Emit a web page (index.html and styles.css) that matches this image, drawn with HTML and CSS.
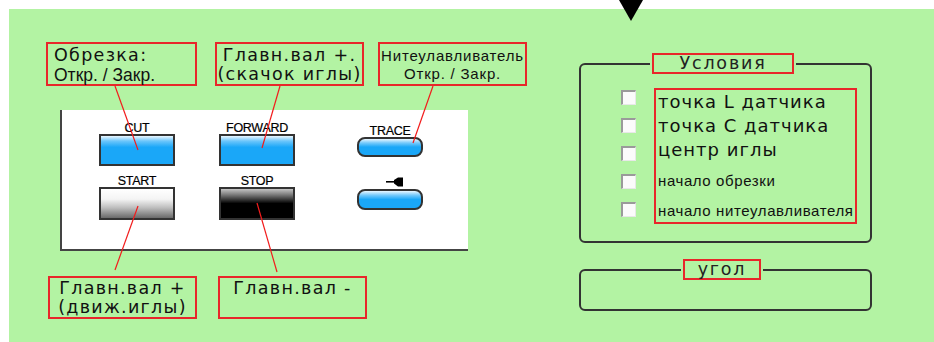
FILE: index.html
```html
<!DOCTYPE html>
<html lang="ru">
<head>
  <meta charset="UTF-8" />
  <title>Панель управления</title>
  <link rel="stylesheet" href="styles.css">
</head>
<body>
<div class="page">
  <div class="marker"></div>

  <div class="screen">
    <div class="left">
      <!-- notes above the panel -->
      <div class="notes notes-top">
        <div class="note note-cut">
          <p class="t-wide">Обрезка:</p>
          <p class="t-mid">Откр. / Закр.</p>
        </div>
        <div class="note note-fwd center">
          <p class="t-wide">Главн.вал +.</p>
          <p class="t-wide">(скачок иглы)</p>
        </div>
        <div class="note note-trace center">
          <p class="t-small">Нитеулавливатель</p>
          <p class="t-small">Откр. / Закр.</p>
        </div>
      </div>

      <div class="panel">
        <div class="ctl">
          <span class="lbl">CUT</span>
          <div class="btn blue"></div>
        </div>
        <div class="ctl">
          <span class="lbl">FORWARD</span>
          <div class="btn blue"></div>
        </div>
        <div class="ctl ctl-trace">
          <span class="lbl">TRACE</span>
          <div class="pill"></div>
        </div>
        <div class="ctl">
          <span class="lbl">START</span>
          <div class="btn white"></div>
        </div>
        <div class="ctl">
          <span class="lbl">STOP</span>
          <div class="btn black"></div>
        </div>
        <div class="ctl ctl-back">
          <svg class="ico" width="18" height="10" viewBox="0 0 18 10">
            <rect x="0" y="4" width="9" height="1.6" fill="#000"/>
            <polygon points="8,3 12,0.5 17,0.5 17,9.5 12,9.5 8,6.5" fill="#000"/>
          </svg>
          <div class="pill"></div>
        </div>
      </div>

      <!-- notes below the panel -->
      <div class="notes notes-bottom">
        <div class="note note-start center">
          <p class="t-wide">Главн.вал +</p>
          <p class="t-wide">(движ.иглы)</p>
        </div>
        <div class="note note-stop center">
          <p class="t-wide">Главн.вал -</p>
        </div>
      </div>
    </div>

    <div class="right">
      <fieldset class="group group-cond">
        <legend class="legend-cond"><span>Условия</span></legend>
        <div class="conds">
          <div class="checks">
            <span class="chk"></span>
            <span class="chk"></span>
            <span class="chk"></span>
            <span class="chk"></span>
            <span class="chk"></span>
          </div>
          <div class="cond-list">
            <p class="c-big">точка L датчика</p>
            <p class="c-big">точка C датчика</p>
            <p class="c-big">центр иглы</p>
            <p class="c-small">начало обрезки</p>
            <p class="c-small">начало нитеулавливателя</p>
          </div>
        </div>
      </fieldset>

      <fieldset class="group group-angle">
        <legend class="legend-angle"><span>угол</span></legend>
      </fieldset>
    </div>
  </div>

  <!-- leader lines from the notes to the buttons -->
  <svg class="leaders" width="934" height="342" viewBox="0 0 934 342">
    <g stroke="#f21c1c" stroke-width="1.2" fill="none">
      <line x1="115" y1="86" x2="138" y2="150"/>
      <line x1="280" y1="86" x2="262" y2="148"/>
      <line x1="433" y1="86" x2="413" y2="143"/>
      <line x1="138" y1="206" x2="115" y2="270"/>
      <line x1="257" y1="203" x2="277" y2="272"/>
    </g>
  </svg>
</div>
</body>
</html>
```

FILE: styles.css
```css
body {
  margin: 0;
  background: #fff;
  color: #111;
}

p {
  margin: 0;
}

.page {
  position: relative;
  width: 934px;
  height: 342px;
  overflow: hidden;
}

.marker {
  position: absolute;
  left: 619px;
  top: 0;
  width: 0;
  height: 0;
  border-left: 12px solid transparent;
  border-right: 12px solid transparent;
  border-top: 21px solid #000;
  z-index: 2;
}

.screen {
  display: flex;
  margin: 9px 0 0 9px;
  height: 333px;
  background: #b3f3a3;
}

.left {
  width: 560px;
}

.right {
  width: 293px;
  padding-left: 10px;
}

/* red note boxes */
.notes {
  display: flex;
}

.notes-top {
  margin-top: 33px;
  padding-left: 37px;
}

.notes-bottom {
  margin-top: 25px;
  padding-left: 39px;
}

.note {
  box-sizing: border-box;
  height: 44px;
  border: 2px solid #e8262a;
  width: 149px;
}

.note.center {
  text-align: center;
}

.note-cut {
  width: 151px;
  padding: 2px 0 0 6px;
}

.note-fwd {
  margin-left: 18px;
  padding-top: 2px;
}

.note-trace {
  margin-left: 14px;
  padding-top: 3px;
}

.note-start {
  height: 43px;
  padding-top: 1px;
}

.note-stop {
  height: 43px;
  margin-left: 21px;
  padding-top: 1px;
}

.t-wide {
  font-family: "DejaVu Sans", sans-serif;
  font-size: 17.5px;
  letter-spacing: 1.3px;
  line-height: 19px;
}

.t-mid {
  font-family: "Liberation Sans", sans-serif;
  font-size: 17.5px;
  line-height: 20px;
}

.t-small {
  font-family: "Liberation Sans", sans-serif;
  font-size: 15px;
  letter-spacing: 0.8px;
  line-height: 18px;
}

/* white control panel */
.panel {
  box-sizing: border-box;
  margin: 24px 0 0 51px;
  width: 408px;
  height: 141px;
  background: #fff;
  border-left: 2px solid #444;
  border-bottom: 2px solid #444;
  padding: 12px 0 0 37px;
  display: grid;
  grid-template-columns: 120px 138px 66px;
  grid-template-rows: 44px 45px;
  row-gap: 9px;
}

.ctl {
  display: flex;
  flex-direction: column;
  align-items: center;
  width: 76px;
}

.ctl-trace,
.ctl-back {
  width: 66px;
}

.ctl-trace {
  padding-top: 3px;
}

.lbl {
  font-family: "Liberation Sans", sans-serif;
  font-size: 12.5px;
  line-height: 12px;
  height: 12px;
  letter-spacing: -0.3px;
  color: #000;
  -webkit-text-stroke: 0.2px #000;
}

.btn {
  box-sizing: border-box;
  width: 76px;
  height: 32px;
  border: 2px solid #333;
}

.btn.blue {
  background: linear-gradient(#eaf7ff 0%, #6cc6fb 18%, #1aa7f8 40%, #1aa7f8 100%);
}

.btn.white {
  height: 33px;
  background: linear-gradient(#fff 0%, #f4f4f4 35%, #bdbdbd 65%, #6a6a6a 100%);
}

.btn.black {
  height: 33px;
  background: linear-gradient(#c4c4c4 0%, #7a7a7a 20%, #000 50%, #000 100%);
}

.pill {
  box-sizing: border-box;
  width: 66px;
  height: 20px;
  border: 2px solid #333;
  border-radius: 8px;
  background: linear-gradient(#eaf7ff 0%, #74c9fb 25%, #1aa7f8 50%, #1aa7f8 100%);
}

.ctl-back .ico {
  margin: 2px 0 2px 10px;
}

.ctl-back .pill {
  height: 21px;
}

/* right side groups */
.group {
  box-sizing: border-box;
  margin: 0;
  padding: 0;
  width: 293px;
  border: 2px solid #333;
  border-radius: 6px;
}

.group legend {
  padding: 0 2px;
}

.group legend span {
  display: block;
  box-sizing: border-box;
  height: 21px;
  border: 2px solid #e8262a;
  font-family: "DejaVu Sans", sans-serif;
  font-size: 17.5px;
  line-height: 17px;
  letter-spacing: 1.8px;
  text-align: center;
  color: #222;
}

.group-cond {
  margin-top: 44px;
  height: 190px;
}

.legend-cond {
  margin-left: 69px;
}

.legend-cond span {
  width: 142px;
}

.group-angle {
  margin-top: 16px;
  height: 52px;
}

.legend-angle {
  margin-left: 100px;
}

.legend-angle span {
  width: 78px;
}

.conds {
  display: flex;
  margin: 14px 0 0 40px;
}

.checks {
  display: flex;
  flex-direction: column;
  gap: 13px;
  padding-top: 2px;
}

.chk {
  box-sizing: border-box;
  width: 15px;
  height: 15px;
  background: #fbfbfb;
  border-top: 2px solid #9a9a9a;
  border-left: 2px solid #9a9a9a;
  border-right: 1px solid #e8e8e8;
  border-bottom: 1px solid #e8e8e8;
}

.cond-list {
  box-sizing: border-box;
  margin-left: 18px;
  width: 203px;
  height: 136px;
  border: 2px solid #e8262a;
  padding: 0 0 0 2px;
  color: #111;
}

.c-big {
  font-family: "DejaVu Sans", sans-serif;
  font-size: 18px;
  letter-spacing: 1px;
  line-height: 24px;
}

.c-small {
  font-family: "Liberation Sans", sans-serif;
  font-size: 15px;
  letter-spacing: 0.6px;
  line-height: 30px;
}

.c-small:first-of-type,
.c-big + .c-small {
  padding-top: 4px;
}

.leaders {
  position: absolute;
  left: 0;
  top: 0;
  pointer-events: none;
}
```
